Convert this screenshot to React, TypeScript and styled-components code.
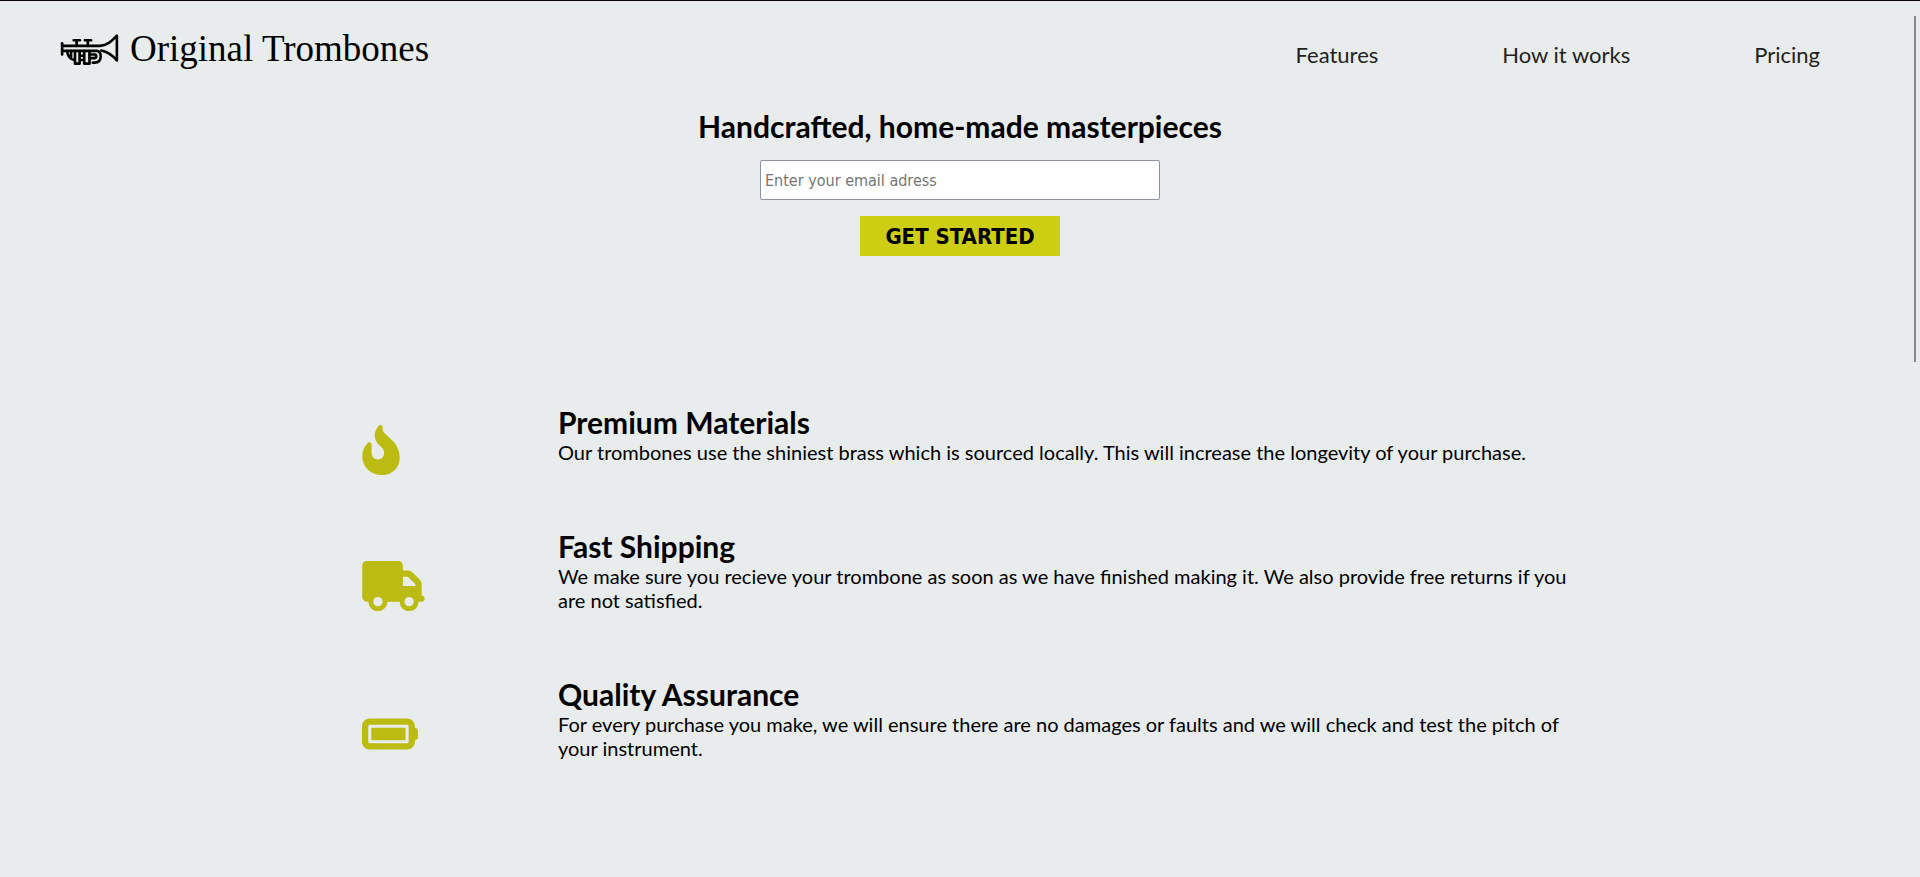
import React from "react";
import styled, { createGlobalStyle } from "styled-components";
import { FaBatteryFull, FaFireFlameCurved, FaTruck } from "react-icons/fa6";
import type { IconType } from "react-icons";

const GlobalStyle = createGlobalStyle`
  *, *::before, *::after { box-sizing: border-box; }
  body {
    margin: 0;
    background: #e8eced;
    color: #000;
    font-family: Lato, "Open Sans", sans-serif;
    font-size: 20px;
    line-height: 24px;
  }
  h1, h2, p, ul { margin: 0; padding: 0; }
`;

const Page = styled.div`
  min-height: 100vh;
  border-top: 1px solid #0c0410;
`;

const Header = styled.header`
  display: flex;
  justify-content: space-between;
  align-items: flex-start;
  padding: 24px 100px 0 60px;
`;

const Brand = styled.a`
  display: flex;
  align-items: center;
  gap: 11px;
  color: #000;
  text-decoration: none;
`;

const BrandName = styled.span`
  font-family: "Liberation Serif", serif;
  font-size: 37px;
  line-height: 48px;
`;

const NavList = styled.ul`
  display: flex;
  gap: 124px;
  padding-top: 16px;
  list-style: none;
`;

const NavLink = styled.a`
  color: #231f20;
  font-size: 22px;
  line-height: 28px;
  text-decoration: none;
`;

const Hero = styled.section`
  display: flex;
  flex-direction: column;
  align-items: center;
  padding: 35px 20px 0;
`;

const HeroTitle = styled.h1`
  font-size: 30px;
  line-height: 36px;
`;

const SignupForm = styled.form`
  display: flex;
  flex-direction: column;
  align-items: center;
  gap: 16px;
  width: 100%;
  padding-top: 16px;
`;

const EmailInput = styled.input`
  width: 400px;
  max-width: 100%;
  height: 40px;
  padding: 0 4px;
  border: 1px solid #8f8f9d;
  border-radius: 2px;
  background: #fff;
  font-family: "DejaVu Sans Condensed", "Noto Sans", sans-serif;
  font-size: 16px;
  &::placeholder { color: #757575; opacity: 1; }
`;

const SubmitButton = styled.button`
  width: 200px;
  height: 40px;
  padding: 0;
  border: 0;
  background: #cdcd11;
  color: #000;
  font-family: "DejaVu Sans Condensed", "Noto Sans", sans-serif;
  font-size: 22px;
  font-weight: 700;
  cursor: pointer;
`;

const FeatureList = styled.section`
  display: flex;
  flex-direction: column;
  gap: 32px;
  max-width: 1196px;
  margin: 0 auto;
  padding: 148px 0 84px;
`;

const FeatureRow = styled.article`
  display: grid;
  grid-template-columns: 196px 1fr;
  align-items: center;
`;

const FeatureIcon = styled.div<{ $width: number }>`
  display: flex;
  width: ${({ $width }) => $width}px;
  height: 50px;
  color: #bbbb11;
  svg { width: 100%; height: 100%; }
`;

const FeatureText = styled.div`
  margin-right: -20px;
  padding-bottom: 32px;
`;

const FeatureTitle = styled.h2`
  font-size: 30px;
  line-height: 36px;
`;

const ScrollThumb = styled.div`
  position: fixed;
  top: 16px;
  right: 4px;
  width: 2px;
  height: 346px;
  background: #88898a;
`;

const TrumpetLogo = () => (
  <svg
    width="59"
    height="31"
    viewBox="30 26 176 94"
    fill="none"
    stroke="#000"
    strokeWidth="8"
    strokeLinecap="round"
    strokeLinejoin="round"
    aria-hidden="true"
  >
    <path d="M35 54v34" />
    <path d="M35 62H150C174 61 187 45 201 31V106C188 91 174 80 154 76" />
    <path d="M35 77H140C156 77 158 112 134 113H128" />
    <path d="M70 45H89M79 45V62M104 45H123M113 45V62" />
    <path d="M50 78C52 93 59 103 72 105M62 78V96" />
    <path d="M74 78V116H88V78M102 78V116H118V78M88 92H102M88 105H102" />
    <path d="M118 88H134C140 88 140 99 134 99H118" />
  </svg>
);

const navItems = [
  { label: "Features", href: "#features" },
  { label: "How it works", href: "#how-it-works" },
  { label: "Pricing", href: "#pricing" },
];

const features: { icon: IconType; iconWidth: number; title: string; text: string }[] = [
  {
    icon: FaFireFlameCurved,
    iconWidth: 38,
    title: "Premium Materials",
    text: "Our trombones use the shiniest brass which is sourced locally. This will increase the longevity of your purchase.",
  },
  {
    icon: FaTruck,
    iconWidth: 63,
    title: "Fast Shipping",
    text: "We make sure you recieve your trombone as soon as we have finished making it. We also provide free returns if you are not satisfied.",
  },
  {
    icon: FaBatteryFull,
    iconWidth: 56,
    title: "Quality Assurance",
    text: "For every purchase you make, we will ensure there are no damages or faults and we will check and test the pitch of your instrument.",
  },
];

export default function App() {
  return (
    <>
      <GlobalStyle />
      <Page>
        <Header>
          <Brand href="#">
            <TrumpetLogo />
            <BrandName>Original Trombones</BrandName>
          </Brand>
          <nav>
            <NavList>
              {navItems.map((item) => (
                <li key={item.href}>
                  <NavLink href={item.href}>{item.label}</NavLink>
                </li>
              ))}
            </NavList>
          </nav>
        </Header>
        <main>
          <Hero>
            <HeroTitle>Handcrafted, home-made masterpieces</HeroTitle>
            <SignupForm onSubmit={(event) => event.preventDefault()}>
              <EmailInput
                type="email"
                name="email"
                aria-label="Email address"
                placeholder="Enter your email adress"
              />
              <SubmitButton type="submit">GET STARTED</SubmitButton>
            </SignupForm>
          </Hero>
          <FeatureList id="features">
            {features.map(({ icon: Icon, iconWidth, title, text }) => (
              <FeatureRow key={title}>
                <FeatureIcon $width={iconWidth}>
                  <Icon aria-hidden="true" />
                </FeatureIcon>
                <FeatureText>
                  <FeatureTitle>{title}</FeatureTitle>
                  <p>{text}</p>
                </FeatureText>
              </FeatureRow>
            ))}
          </FeatureList>
        </main>
      </Page>
      <ScrollThumb />
    </>
  );
}
